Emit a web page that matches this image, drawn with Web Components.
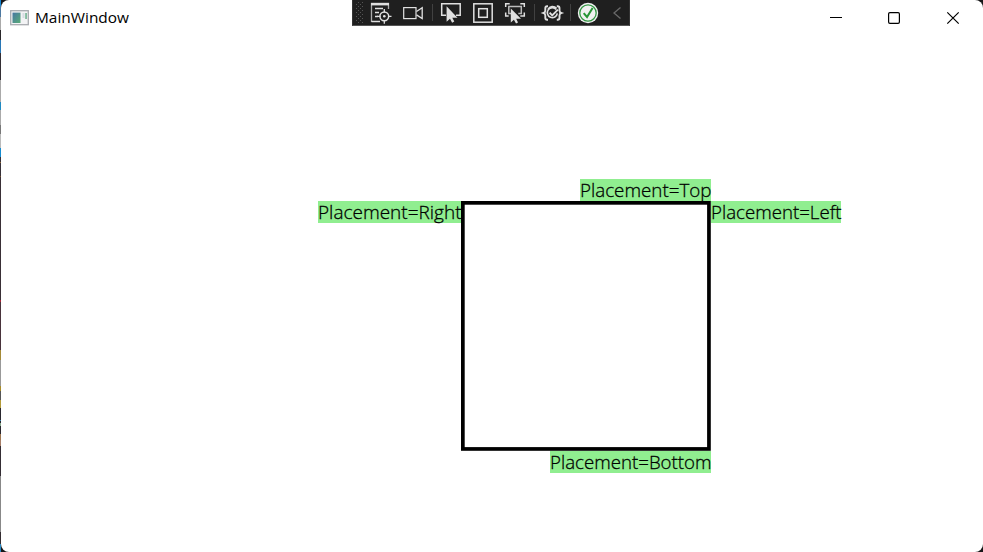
<!DOCTYPE html>
<html lang="en">
<head>
<meta charset="utf-8">
<title>MainWindow</title>
<style>html,body{margin:0;height:100%;overflow:hidden;background:#171718}</style>
</head>
<body>
<app-window></app-window>
<script>
const define = (name, html, setup) => customElements.define(name, class extends HTMLElement {
  connectedCallback() {
    if (this.shadowRoot) return;
    const t = document.createElement('template');
    t.innerHTML = html;
    this.attachShadow({mode: 'open'}).append(t.content.cloneNode(true));
    if (setup) setup(this);
  }
});

/* Text fitted to a given advance width */
define('fit-text', `<style>:host{display:block}svg{display:block;overflow:visible}
text{font-family:"Open Sans","Noto Sans",sans-serif;fill:#000}
:host([weight="300"]) text{stroke:#000;stroke-width:.28px}</style><svg><text x="0"></text></svg>`, el => {
  const svg = el.shadowRoot.querySelector('svg'), text = svg.firstElementChild;
  svg.setAttribute('width', el.getAttribute('width'));
  svg.setAttribute('height', el.getAttribute('height'));
  text.setAttribute('y', el.getAttribute('baseline'));
  text.setAttribute('font-size', el.getAttribute('size'));
  text.setAttribute('font-weight', el.getAttribute('weight') || 400);
  text.setAttribute('textLength', el.getAttribute('length'));
  text.setAttribute('lengthAdjust', 'spacingAndGlyphs');
  text.textContent = el.getAttribute('text');
});

define('popup-label', `<style>:host{position:absolute;display:block;height:22px;background:#90ee90}
:host([side=top]){right:0;bottom:100%}
:host([side=bottom]){right:0;top:100%}
:host([side=right]){right:100%;top:0}
:host([side=left]){left:100%;top:0}</style><slot></slot>`);

define('target-box', `<style>:host{display:block;position:relative;width:250px;height:250px}
svg{display:block}</style>
<svg width="250" height="250"><rect x="1.85" y="1.85" width="246.1" height="246.1" fill="none" stroke="#000" stroke-width="3.7"/></svg><slot></slot>`);

define('tool-bar', `<style>:host{display:block;width:278px;height:26px;background:#1f1f1f;box-sizing:border-box;border-bottom:1px solid #555;border-left:1px solid #333;border-right:1px solid #333}
svg{display:block;margin-left:-1px}</style>
<svg width="278" height="25" fill="none" stroke="#e0e0e0" stroke-width="1.3">
<defs><pattern id="grip" width="4" height="4" patternUnits="userSpaceOnUse"><path d="M0 0h1v1H0zM2 2h1v1H2z" fill="#555" stroke="none"/></pattern></defs>
<rect x="4" y="2" width="7" height="21" fill="url(#grip)" stroke="none"/>
<path d="M19.5 22V3.5h17V9" stroke="#aaa"/><path d="M19 4.2h18" stroke-width="2.4"/>
<path d="M23 8.5h8M23 12.5h4M23 16.5h3M19.5 21.5H28" />
<circle cx="32.3" cy="16.3" r="4.4" stroke-width="1.5"/><circle cx="32.3" cy="16.3" r="1.3" fill="#e0e0e0" stroke="none"/>
<path d="M32.3 9v3.5M32.3 20v3.7M25 16.3h3.5M36 16.3h3.5"/>
<rect x="51.7" y="7.6" width="12.3" height="11" stroke-width="1.2"/><path d="M64.5 11.5l5.7-3.7v10.8l-5.7-3.7"/>
<path d="M80.5 4v17M182.5 4v17M218.5 4v17" stroke="#414141" stroke-width="1"/>
<path d="M94 15.3h-4.3V3.7h18.5v11.6H104" stroke-width="1.5"/>
<path d="M94.6 6.2v15.6l3.4-3 2.1 4 2.2-1.2-2-3.8h5.2z" fill="#e0e0e0" stroke="none"/>
<rect x="121.8" y="3.8" width="18.4" height="18.4" stroke-width="1.5"/><rect x="126.7" y="8.7" width="8.6" height="8.6" stroke-width="1.5"/>
<path d="M153.7 7V3.7h4M168.3 3.7h4V7M153.7 12.5V16h3M172.3 12.5V16h-4" stroke-width="1.5"/>
<path d="M159 13.5h-2.2v-7h12.5v7h-3" stroke="#bbb" stroke-width="1.5"/>
<path d="M158.8 8.5v14l3.1-2.7 2.1 3.8 2-1-1.8-3.8h4.8z" fill="#e0e0e0" stroke="none"/>
<path d="M196 6.2h-.9c-1.3 0-1.8.7-1.8 2v2.4c0 1.3-.5 2-1.7 2.4 1.2.4 1.7 1.1 1.7 2.4v2.4c0 1.3.5 2 1.8 2h.9M204.8 6.2h.9c1.3 0 1.8.7 1.8 2v2.4c0 1.3.5 2 1.7 2.4-1.2.4-1.7 1.1-1.7 2.4v2.4c0 1.3-.5 2-1.8 2h-.9" stroke-width="1.9"/>
<path d="M204.3 9.6a5 5 0 1 0 1 3.7M196 9.3c1.8-3.3 6-3.7 8.5-.9" stroke-width="1.6"/><path d="M197.6 12.6l2.6 2.8 5.7-5.7" stroke-width="1.9"/>
<circle cx="236" cy="13" r="10.2" fill="#f1f1f1" stroke="none"/><circle cx="236" cy="13" r="8.2" stroke="#339744" stroke-width="1.3"/>
<path d="M231.7 13.2l3.3 3.8 5.6-9" stroke="#279536" stroke-width="2"/>
<path d="M268.5 7.5l-6.5 5.5 6.5 5.5" stroke="#696969" stroke-width="1.3"/>
</svg>`);

define('title-bar', `<style>:host{display:grid;grid-template-columns:351px 278px 1fr;height:36px}
.name{display:flex;gap:6px;padding:9px 0 0 9px;align-items:flex-start}.controls{display:flex;justify-content:flex-end;align-items:flex-start;padding-right:1px}
.controls svg{display:block}svg{flex:none}</style>
<div class="name"><svg width="19" height="17"><defs><linearGradient id="pane" x2="1" y2="1"><stop stop-color="#4776a3"/><stop offset="1" stop-color="#5aad77"/></linearGradient></defs>
<rect x=".7" y="1.7" width="17.6" height="14" fill="#f3f3f5" stroke="#a8abb0" stroke-width="1.3"/><rect x="2.5" y="3.6" width="8" height="10.4" fill="url(#pane)"/><path d="M12.5 4h2v5h-2z" fill="#d6dce2"/><path d="M15.3 4h1.5v6h-1.5z" fill="#68ae8b"/></svg>
<fit-text text="MainWindow" width="94" height="18" length="94" baseline="14" size="15.3"></fit-text></div>
<tool-bar></tool-bar>
<div class="controls"><svg width="176" height="36" fill="none" stroke="#000" stroke-width="1.2"><path d="M24 17.5h12" stroke-width="1"/><rect x="82.6" y="12.6" width="10.8" height="10.8" rx="1.3"/><path d="M141.3 12.3l11.4 11.4M152.7 12.3l-11.4 11.4"/></svg></div>`);

define('window-content', `<style>:host{display:block;padding:165px 0 0 460px}</style>
<target-box>
<popup-label side="top"><fit-text text="Placement=Top" width="131" height="22" length="131.5" baseline="18" size="18.8" weight="300"></fit-text></popup-label>
<popup-label side="right"><fit-text text="Placement=Right" width="143" height="22" length="143.5" baseline="18" size="18.8" weight="300"></fit-text></popup-label>
<popup-label side="left"><fit-text text="Placement=Left" width="130" height="22" length="130.5" baseline="18" size="18.8" weight="300"></fit-text></popup-label>
<popup-label side="bottom"><fit-text text="Placement=Bottom" width="161" height="22" length="161.5" baseline="18" size="18.8" weight="300"></fit-text></popup-label>
</target-box>`);

define('app-window', `<style>:host{display:block;box-sizing:border-box;width:983px;height:552px;padding-left:1px;
background:linear-gradient(#1686d3 0 6px,#4d78a0 6px 17px,#aaa 17px 30px,#29272a 30px 40px,#2876b5 40px 53px,#332e34 53px 80px,#aaa 80px 102px,#208ac2 102px 110px,#aaa 110px 125px,#777 125px 134px,#bbb 134px 148px,#168cd0 148px 157px,#373138 157px 162px,#8c6538 162px 163px,#373138 163px 176px,#73502b 176px 177px,#392f36 177px 300px,#a62739 300px 302px,#49333b 302px 350px,#a48a37 350px 360px,#999 360px 386px,#a88c28 386px 391px,#555 391px 400px,#b29a39 400px 408px,#29272e 408px 420px,#3882aa 420px 421px,#29272e 421px 423px,#88a88c 423px 426px,#29272e 426px 434px,#9c7550 434px 440px,#a67e67 440px 446px,#342d34 446px 476px,#888 476px 532px,#332c30 532px 544px,#2a89c2 544px 552px) left/1px 100% no-repeat,#171718}
main{height:552px;background:#fff;border-radius:8px;overflow:hidden}</style><main><title-bar></title-bar><window-content></window-content></main>`);
</script>
</body>
</html>
